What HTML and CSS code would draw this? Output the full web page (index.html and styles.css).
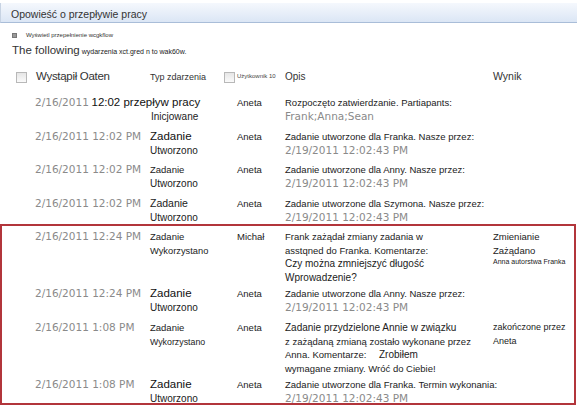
FILE: index.html
```html
<!DOCTYPE html>
<html lang="pl">
<head>
  <meta charset="UTF-8" />
  <title>Opowieść o przepływie pracy</title>
  <link rel="stylesheet" href="styles.css">
</head>
<body>

  <div class="title-bar">Opowieść o przepływie pracy</div>

  <div class="show-link"><span class="bullet"></span>Wyświetl przepełnienie wcgkflow</div>
  <div class="intro"><span class="big">The following</span> wydarzenia xct.gred n to wak60w.</div>

  <div class="row head">
    <div class="c-date"><span class="chk"></span><span class="h-big">Wystąpił Oaten</span></div>
    <div class="c-type"><span class="h-mid">Typ zdarzenia</span></div>
    <div class="c-user"><span class="chk small-chk"></span><span class="h-tiny">Użytkownik 10</span></div>
    <div class="c-desc"><span class="h-desc">Opis</span></div>
    <div class="c-res"><span class="h-res">Wynik</span></div>
  </div>

  <div class="row">
    <div class="c-date"><span class="date">2/16/2011</span> <span class="big-dark">12:02 przepływ pracy</span></div>
    <div class="c-type"><span class="sub push">Inicjowane</span></div>
    <div class="c-user">Aneta</div>
    <div class="c-desc">Rozpoczęto zatwierdzanie. Partiapants:<br><span class="date">Frank;Anna;Sean</span></div>
    <div class="c-res"></div>
  </div>

  <div class="row r33">
    <div class="c-date"><span class="date">2/16/2011 12:02 PM</span></div>
    <div class="c-type"><span class="big-dark">Zadanie</span><br><span class="sub">Utworzono</span></div>
    <div class="c-user">Aneta</div>
    <div class="c-desc">Zadanie utworzone dla Franka. Nasze przez:<br><span class="date">2/19/2011 12:02:43 PM</span></div>
    <div class="c-res"></div>
  </div>

  <div class="row">
    <div class="c-date"><span class="date">2/16/2011 12:02 PM</span></div>
    <div class="c-type">Zadanie<br><span class="sub">Utworzono</span></div>
    <div class="c-user">Aneta</div>
    <div class="c-desc">Zadanie utworzone dla Anny. Nasze przez:<br><span class="date">2/19/2011 12:02:43 PM</span></div>
    <div class="c-res"></div>
  </div>

  <div class="row before-box">
    <div class="c-date"><span class="date">2/16/2011 12:02 PM</span></div>
    <div class="c-type"><span class="mid">Zadanie</span><br><span class="sub">Utworzono</span></div>
    <div class="c-user">Aneta</div>
    <div class="c-desc">Zadanie utworzone dla Szymona. Nasze przez:<br><span class="date">2/19/2011 12:02:43 PM</span></div>
    <div class="c-res"></div>
  </div>

  <div class="highlight">
    <div class="row tall">
      <div class="c-date"><span class="date">2/16/2011 12:24 PM</span></div>
      <div class="c-type">Zadanie<br><span class="sub wyk">Wykorzystano</span></div>
      <div class="c-user">Michał</div>
      <div class="c-desc">Frank zażądał zmiany zadania w<br>asstqned do Franka. Komentarze:<br><span class="large">Czy można zmniejszyć długość<br>Wprowadzenie?</span></div>
      <div class="c-res">Zmienianie<br>Zażądano<br><span class="tiny">Anna autorstwa Franka</span></div>
    </div>

    <div class="row">
      <div class="c-date"><span class="date">2/16/2011 12:24 PM</span></div>
      <div class="c-type"><span class="big-dark">Zadanie</span><br><span class="sub">Utworzono</span></div>
      <div class="c-user">Aneta</div>
      <div class="c-desc">Zadanie utworzone dla Anny. Nasze przez:<br><span class="date">2/19/2011 12:02:43 PM</span></div>
      <div class="c-res"></div>
    </div>

    <div class="row tall">
      <div class="c-date"><span class="date">2/16/2011 1:08 PM</span></div>
      <div class="c-type">Zadanie<br><span class="sub small">Wykorzystano</span></div>
      <div class="c-user">Aneta</div>
      <div class="c-desc"><span class="large">Zadanie przydzielone Annie w związku</span><br>z zażądaną zmianą zostało wykonane przez<br>Anna. Komentarze: <span class="large gap">Zrobiłem</span><br>wymagane zmiany. Wróć do Ciebie!</div>
      <div class="c-res small-res">zakończone przez<br>Aneta</div>
    </div>

    <div class="row last">
      <div class="c-date"><span class="date">2/16/2011 1:08 PM</span></div>
      <div class="c-type"><span class="big-dark">Zadanie</span><br><span class="sub">Utworzono</span></div>
      <div class="c-user">Aneta</div>
      <div class="c-desc">Zadanie utworzone dla Franka. Termin wykonania:<br><span class="date">2/19/2011 12:02:43 PM</span></div>
      <div class="c-res"></div>
    </div>
  </div>

</body>
</html>
```

FILE: styles.css
```css
* {
  margin: 0;
  padding: 0;
  box-sizing: border-box;
}

body {
  font-family: 'Liberation Sans', Arial, sans-serif;
  font-size: 9.5px;
  color: #222;
  background: #fff;
  width: 577px;
  height: 406px;
  overflow: hidden;
}

.title-bar {
  margin-top: 3px;
  height: 20px;
  padding: 5px 0 0 10px;
  font-size: 10.5px;
  color: #333;
  background: linear-gradient(to bottom, #f5f8fd, #dbe6f5);
  border-left: 1px solid #c7d3e3;
  border-bottom: 1px solid #a9bdd8;
}

.show-link {
  margin-top: 9px;
  padding-left: 12px;
  font-size: 6px;
  color: #333;
  display: flex;
  align-items: center;
}

.bullet {
  width: 5px;
  height: 5px;
  background: #999;
  border: 1px solid #777;
  margin-right: 9px;
}

.intro {
  margin-top: 6px;
  padding-left: 12px;
  font-size: 7px;
  color: #222;
}

.intro .big {
  font-size: 11.5px;
  color: #333;
}

.row {
  display: grid;
  grid-template-columns: 115px 87px 48px 208px 1fr;
  padding-left: 35px;
  height: 34px;
  line-height: 13.5px;
  white-space: nowrap;
}

.row.r33 {
  height: 33px;
}

.row.head {
  margin-top: 11px;
  margin-bottom: 9px;
  height: 20px;
  align-items: center;
}

.row.head .c-date {
  margin-left: -19px;
  display: flex;
  align-items: center;
}

.row.head .c-user {
  margin-left: -13px;
  display: flex;
  align-items: flex-start;
}

.chk {
  display: inline-block;
  width: 11px;
  height: 11px;
  border: 1px solid #b8b8b8;
  background: linear-gradient(to bottom, #e6e6e6, #fafafa);
  margin-right: 9px;
}

.small-chk {
  margin-right: 2px;
}

.h-big {
  font-size: 11.5px;
  letter-spacing: -0.3px;
  color: #333;
}

.h-mid {
  font-size: 9px;
  color: #333;
}

.h-tiny {
  font-size: 6px;
  color: #444;
  line-height: 8px;
}

.h-desc {
  font-size: 10px;
  color: #333;
}

.h-res {
  font-size: 10.5px;
  color: #333;
}

.date {
  font-family: 'DejaVu Sans', Verdana, sans-serif;
  font-size: 10.5px;
  color: #8a8a8a;
}

.big-dark {
  font-size: 11.5px;
  color: #111;
}

.mid {
  font-size: 10.5px;
}

.sub {
  font-size: 10px;
}

.sub.wyk {
  font-size: 9.3px;
}

.sub.small {
  font-size: 8.8px;
}

.push {
  display: inline-block;
  margin-top: 13.5px;
  margin-left: 1px;
}

.large {
  font-size: 10px;
}

.gap {
  margin-left: 10px;
}

.tiny {
  font-size: 7px;
  line-height: 9px;
  display: inline-block;
  vertical-align: top;
}

.small-res {
  font-size: 9px;
}

.row.before-box {
  height: 27px;
}

.highlight {
  width: 576px;
  border: 2px solid #b2353b;
  padding-top: 4px;
}

.highlight .row {
  padding-left: 33px;
}

.highlight .row.tall {
  height: 57px;
}

.highlight .row.last {
  height: 25px;
}
```
